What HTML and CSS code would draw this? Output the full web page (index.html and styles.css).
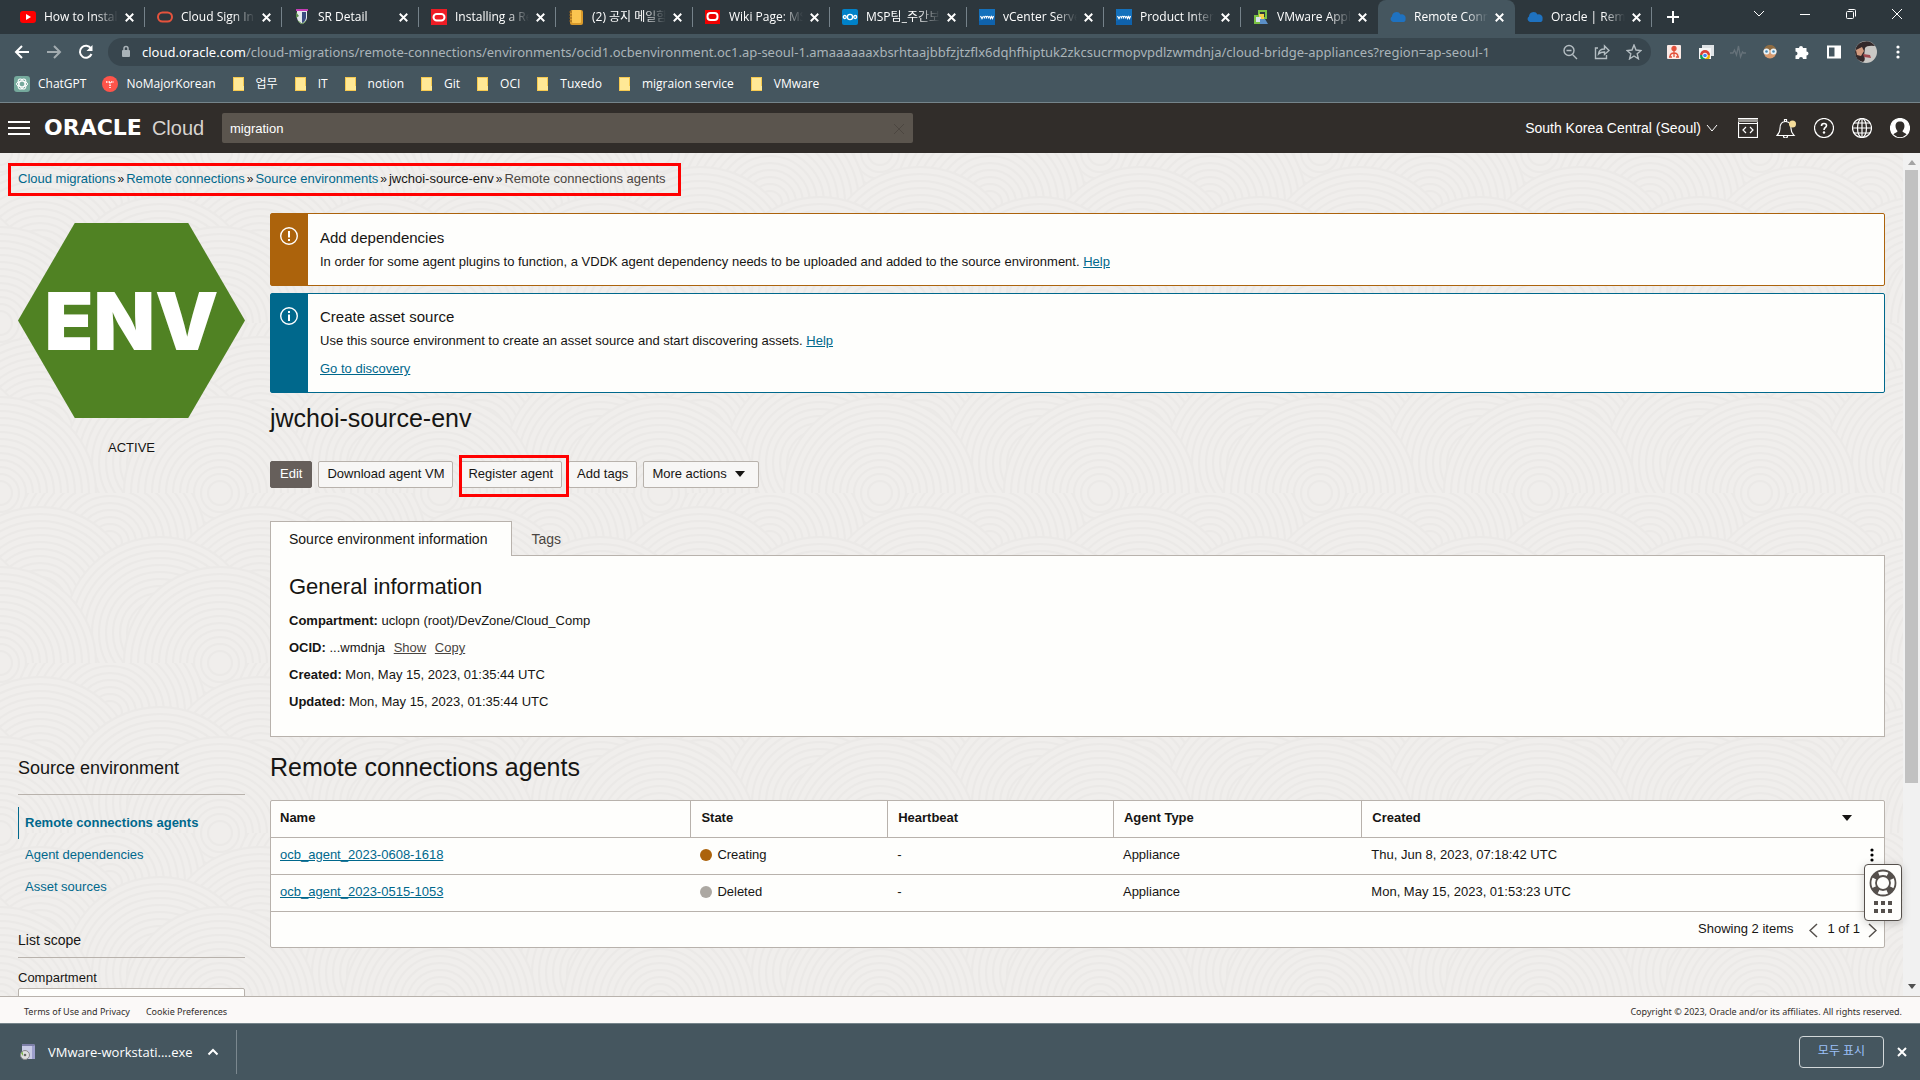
FILE: index.html
```html
<!DOCTYPE html>
<html lang="en">
<head>
    <meta charset="UTF-8">
    <meta name="viewport" content="width=device-width, initial-scale=1.0">
    <title>Remote Connections | Oracle Cloud</title>
    <link rel="stylesheet" href="styles.css">
</head>
<body>
    <!-- shared icons -->
    <svg class="defs" width="0" height="0" aria-hidden="true">
        <symbol id="i-x" viewBox="0 0 16 16"><path d="M4 4l8 8M12 4l-8 8" stroke="currentColor" stroke-width="2" fill="none"/></symbol>
        <symbol id="i-folder" viewBox="0 0 16 16"><path d="M1 1h11v14H1z" fill="#f6c94f"/><path d="M2 2h9v8h1v4H2z" fill="#ffe896"/></symbol>
        <symbol id="i-cloud" viewBox="0 0 16 16"><path d="M3 13a3 3 0 0 1-1-5.500 4.500 4.500 0 0 1 8.500-2A3.800 3.800 0 0 1 15.500 10q.5 3-3 3z" fill="#1f72c0"/></symbol>
        <symbol id="i-vmw" viewBox="0 0 16 16"><path d="M0 0h16v16H0z" fill="#0f62ac"/><path d="M0 0h16v7L0 12z" fill="#1a80cc" opacity=".5"/><path d="M1.500 7l1.500 2.500L4.500 7M5.500 9.500V8q1-1.500 2 0v1.500M7.500 8q1-1.500 2 0v1.500M10.500 7l1 2.500 1-2 1 2 1-2.500" fill="none" stroke="#fff" stroke-width="1.200"/></symbol>
        <symbol id="i-oracle" viewBox="0 0 16 16"><path d="M0 0h16v16H0z" fill="#ee1c25"/><rect x="2.500" y="5" width="11" height="6.500" rx="3.200" fill="none" stroke="#fff" stroke-width="2"/></symbol>
        <symbol id="i-caret" viewBox="0 0 10 6"><path d="M0 0h10L5 6z" fill="currentColor"/></symbol>
        <pattern id="rings" width="220" height="170" patternUnits="userSpaceOnUse">
            <g id="ring" fill="#f0eeec" stroke="#ebe9e7" stroke-width="2">
                <circle r="96"/><circle r="89"/><circle r="82"/><circle r="75"/><circle r="68"/><circle r="61"/><circle r="54"/><circle r="47"/><circle r="40"/><circle r="33"/><circle r="26"/><circle r="19"/><circle r="12"/>
            </g>
            <use href="#ring" x="220"/><use href="#ring" x="110" y="50"/>
            <use href="#ring" x="40" y="110"/><use href="#ring" x="260" y="110"/><use href="#ring" x="160" y="140"/>
            <use href="#ring" x="-60" y="140"/><use href="#ring" y="170"/><use href="#ring" x="220" y="170"/>
        </pattern>
    </svg>

    <div class="tabstrip">
        <div class="tab"><svg class="fav" viewBox="0 0 16 16"><rect y="2" width="16" height="12" rx="3" fill="#f00"/><path d="M6 5l5 3-5 3z" fill="#fff"/></svg><span class="tab-title">How to Install</span><button class="tab-x" aria-label="Close tab"><svg><use href="#i-x"/></svg></button></div>
        <div class="tab"><svg class="fav" viewBox="0 0 16 16"><rect x="1" y="3.500" width="14" height="9" rx="4.500" fill="none" stroke="#e5533d" stroke-width="2"/></svg><span class="tab-title">Cloud Sign In</span><button class="tab-x" aria-label="Close tab"><svg><use href="#i-x"/></svg></button></div>
        <div class="tab"><svg class="fav" viewBox="0 0 16 16"><path d="M3 2h10v7q-1 5-5 6-4-1-5-6z" fill="#e4e8ec"/><path d="M8 3h4v6q-1 4-4 5z" fill="#3b4a80"/><path d="M2 0h12v2H2z" fill="#c43cb4"/><path d="M2 3l3 4-3 2z" fill="#5c8c4c"/><path d="M4 12l4 3 4-3" stroke="#5c8c4c" fill="none"/></svg><span class="tab-title">SR Detail</span><button class="tab-x" aria-label="Close tab"><svg><use href="#i-x"/></svg></button></div>
        <div class="tab"><svg class="fav"><use href="#i-oracle"/></svg><span class="tab-title">Installing a Re</span><button class="tab-x" aria-label="Close tab"><svg><use href="#i-x"/></svg></button></div>
        <div class="tab"><svg class="fav" viewBox="0 0 16 16"><rect x="2" y="1" width="13" height="15" rx="2" fill="#d99a2b"/><rect x="4" y="1" width="9" height="13" rx="1" fill="#fbc550"/><path d="M1 3h3M1 6h3M1 9h3M1 12h3" stroke="#8e5f1e"/></svg><span class="tab-title">(2) 공지 메일함</span><button class="tab-x" aria-label="Close tab"><svg><use href="#i-x"/></svg></button></div>
        <div class="tab"><svg class="fav" viewBox="0 0 16 16"><path d="M0 1h15v14H0z" fill="#f00000"/><rect x="2.500" y="4" width="10" height="7" rx="3" fill="none" stroke="#fff" stroke-width="2"/></svg><span class="tab-title">Wiki Page: MS</span><button class="tab-x" aria-label="Close tab"><svg><use href="#i-x"/></svg></button></div>
        <div class="tab"><svg class="fav" viewBox="0 0 16 16"><rect width="16" height="16" rx="2" fill="#0082c9"/><g fill="none" stroke="#fff" stroke-width="1.300"><circle cx="8" cy="8" r="2.600"/><circle cx="2.800" cy="8" r="1.500"/><circle cx="13.200" cy="8" r="1.500"/></g></svg><span class="tab-title">MSP팀_주간보</span><button class="tab-x" aria-label="Close tab"><svg><use href="#i-x"/></svg></button></div>
        <div class="tab"><svg class="fav"><use href="#i-vmw"/></svg><span class="tab-title">vCenter Server</span><button class="tab-x" aria-label="Close tab"><svg><use href="#i-x"/></svg></button></div>
        <div class="tab"><svg class="fav"><use href="#i-vmw"/></svg><span class="tab-title">Product Inter</span><button class="tab-x" aria-label="Close tab"><svg><use href="#i-x"/></svg></button></div>
        <div class="tab no-sep"><svg class="fav" viewBox="0 0 16 16"><path d="M5 1h9v9H9v5H1V6h4z" fill="#7ac143"/><path d="M7 3h5v5H7z" fill="#2d373d"/><path d="M6 5h5v5H6z" fill="#f5d34a"/><path d="M3 8h5v5H3z" fill="#d7e3ee"/><path d="M7 10h5l3 5H7z" fill="#5b8fc7"/></svg><span class="tab-title">VMware Appl</span><button class="tab-x" aria-label="Close tab"><svg><use href="#i-x"/></svg></button></div>
        <div class="tab active"><svg class="fav"><use href="#i-cloud"/></svg><span class="tab-title">Remote Conn</span><button class="tab-x" aria-label="Close tab"><svg><use href="#i-x"/></svg></button></div>
        <div class="tab"><svg class="fav"><use href="#i-cloud"/></svg><span class="tab-title">Oracle | Rem</span><button class="tab-x" aria-label="Close tab"><svg><use href="#i-x"/></svg></button></div>
        <button class="new-tab" aria-label="New tab"><svg viewBox="0 0 16 16"><path d="M8 2v12M2 8h12" stroke="#fff" stroke-width="2"/></svg></button>
        <div class="win-controls">
            <button aria-label="Search tabs"><svg viewBox="0 0 12 12"><path d="M1 3l5 5 5-5"/></svg></button>
            <button aria-label="Minimize"><svg viewBox="0 0 12 12"><path d="M1 6.500h10"/></svg></button>
            <button aria-label="Restore"><svg viewBox="0 0 12 12"><rect x="1.500" y="3.500" width="7" height="7" rx="1"/><path d="M3.500 1.500h6q1 0 1 1v6"/></svg></button>
            <button aria-label="Close"><svg viewBox="0 0 12 12"><path d="M1 1l10 10M11 1L1 11"/></svg></button>
        </div>
    </div>

    <div class="toolbar">
        <button class="nav-btn" aria-label="Back"><svg viewBox="0 0 16 16"><path d="M15 8H2M8 2L2 8l6 6"/></svg></button>
        <button class="nav-btn dim" aria-label="Forward"><svg viewBox="0 0 16 16"><path d="M1 8h13M8 2l6 6-6 6"/></svg></button>
        <button class="nav-btn" aria-label="Reload"><svg viewBox="0 0 16 16"><path d="M13.500 10A6 6 0 1 1 13 4.500"/><path d="M14.500 1v6h-6z" fill="#fff" stroke="none"/></svg></button>
        <div class="omnibox">
            <svg class="lock" viewBox="0 0 10 14"><rect x="1" y="5" width="8" height="7" rx="1" fill="#a9b3b8"/><path d="M3 6V3.500a2 2 0 0 1 4 0V6" fill="none" stroke="#a9b3b8" stroke-width="1.500"/></svg>
            <span class="url"><b>cloud.oracle.com</b>/cloud-migrations/remote-connections/environments/ocid1.ocbenvironment.oc1.ap-seoul-1.amaaaaaaxbsrhtaajbbfzjtzflx6dqhfhiptuk2zkcsucrmopvpdlzwmdnja/cloud-bridge-appliances?region=ap-seoul-1</span>
            <button aria-label="Zoom"><svg viewBox="0 0 16 16"><circle cx="7" cy="6.500" r="5"/><path d="M4.500 6.500h5M10.500 10.500L15 15"/></svg></button>
            <button aria-label="Share"><svg viewBox="0 0 16 16"><path d="M4 4H1.500v10.500h11V11"/><path d="M4.500 10q.5-5 6-5V2l4.500 4.500-4.500 4V8q-4 0-6 2z"/></svg></button>
            <button aria-label="Bookmark"><svg viewBox="0 0 16 16"><path d="M8 1l2 5 5 .5-3.800 3.300 1.200 5L8 12l-4.400 2.800 1.200-5L1 6.500 6 6z"/></svg></button>
        </div>
        <div class="extensions">
            <button aria-label="Sitemap extension"><svg viewBox="0 0 16 16"><rect x="1" y="1" width="14" height="14" rx="1" fill="#fbeae6"/><g fill="none" stroke="#e2513c" stroke-width="1.300"><circle cx="8" cy="4.500" r="2" fill="#e2513c"/><path d="M8 5v8M4 13q0-4 4-4t4 4"/><path d="M3 13h3M10 13h3"/></g></svg></button>
            <button aria-label="Remote desktop"><svg viewBox="0 0 16 16"><path d="M4 1h12v11h-3V4H4z" fill="#dfe3e6"/><path d="M1 4h12v11H1z" fill="#f5f6f7"/><path d="M2 11a5 5 0 0 1 10 0z" fill="#db4437"/><path d="M2 11h4l1 4H3q-1-1-1-4z" fill="#0f9d58"/><path d="M12 11H8l-1 4h4q1-1 1-4z" fill="#f4b400"/><circle cx="7" cy="11.500" r="2.300" fill="#4285f4" stroke="#fff"/></svg></button>
            <button aria-label="Monitor"><svg viewBox="0 0 16 16"><path d="M0 9h3l1.500-3 2 5 2-9 2 11 2-5 1 1H16" fill="none" stroke="#66727a" stroke-width="1.300"/></svg></button>
            <button aria-label="Mask"><svg viewBox="0 0 16 16"><circle cx="8" cy="8" r="6.500" fill="#d99c70"/><path d="M2 6q1-5 6-5t6 5z" fill="#8f6c42"/><circle cx="4.500" cy="7.500" r="3" fill="#e8f3fa"/><circle cx="11.500" cy="7.500" r="3" fill="#e8f3fa"/><circle cx="4.500" cy="7.500" r="1.300" fill="#4a88b0"/><circle cx="11.500" cy="7.500" r="1.300" fill="#4a88b0"/></svg></button>
            <button aria-label="Extensions"><svg viewBox="0 0 16 16"><path d="M1.500 4H5a2 2 0 1 1 4 0h3.500v3.500a2 2 0 1 1 0 4V15H9a2 2 0 0 0-4 0H1.500v-3.500a2 2 0 0 0 0-4z" fill="#fff"/></svg></button>
            <button aria-label="Side panel"><svg viewBox="0 0 16 16"><path d="M1 1.500h14v13H1zM3 3.500v9h5.500v-9z" fill="#fff" fill-rule="evenodd"/></svg></button>
            <button class="avatar" aria-label="Profile"><svg viewBox="0 0 22 22"><circle cx="11" cy="11" r="11" fill="#c9c8c5"/><path d="M0 11a11 11 0 0 1 20-6q-8-1-10 2l-1 8q2 4-1 6-8-2-8-10z" fill="#33292a"/><path d="M1 9l6-3 2 4-3 5-4-1z" fill="#d19a7e"/><path d="M8 13l7 1 1 3-7-1z" fill="#a14a4f"/></svg></button>
            <button aria-label="Menu"><svg viewBox="0 0 16 16"><g fill="#fff"><circle cx="8" cy="3" r="1.600"/><circle cx="8" cy="8" r="1.600"/><circle cx="8" cy="13" r="1.600"/></g></svg></button>
        </div>
    </div>

    <nav class="bookmarks" aria-label="Bookmarks">
        <a href="#"><svg viewBox="0 0 16 16"><rect width="16" height="16" rx="3" fill="#75a99c"/><g fill="none" stroke="#fff"><ellipse cx="8" cy="8" rx="5.500" ry="2.800"/><ellipse cx="8" cy="8" rx="5.500" ry="2.800" transform="rotate(60 8 8)"/><ellipse cx="8" cy="8" rx="5.500" ry="2.800" transform="rotate(120 8 8)"/></g></svg>ChatGPT</a>
        <a href="#"><svg viewBox="0 0 16 16"><circle cx="8" cy="8" r="8" fill="#ff544a"/><path d="M4 6h8M8 6v6" stroke="#fff" stroke-width="1.500" stroke-dasharray="1.500 1"/></svg>NoMajorKorean</a>
        <a href="#"><svg><use href="#i-folder"/></svg>업무</a>
        <a href="#"><svg><use href="#i-folder"/></svg>IT</a>
        <a href="#"><svg><use href="#i-folder"/></svg>notion</a>
        <a href="#"><svg><use href="#i-folder"/></svg>Git</a>
        <a href="#"><svg><use href="#i-folder"/></svg>OCI</a>
        <a href="#"><svg><use href="#i-folder"/></svg>Tuxedo</a>
        <a href="#"><svg><use href="#i-folder"/></svg>migraion service</a>
        <a href="#"><svg><use href="#i-folder"/></svg>VMware</a>
    </nav>

    <header class="console-header">
        <button class="burger" aria-label="Navigation menu"><span></span><span></span><span></span></button>
        <a class="brand" href="#"><span class="brand-oracle">ORACLE</span><span class="brand-cloud">Cloud</span></a>
        <div class="search">
            <input type="text" value="migration" aria-label="Search">
            <svg viewBox="0 0 12 12"><path d="M1 1l10 10M11 1L1 11" stroke="#4c4640"/></svg>
        </div>
        <button class="region">South Korea Central (Seoul)<svg viewBox="0 0 12 8"><path d="M1 1l5 6 5-6"/></svg></button>
        <div class="header-icons">
            <button aria-label="Developer tools"><svg viewBox="0 0 20 20"><rect x=".5" y=".5" width="19" height="19"/><path d="M0 2.500h20" stroke="#9b9894" stroke-width="3"/><path d="M0 5.500h20M8 9l-3 3 3 3M12 9l3 3-3 3"/></svg></button>
            <button aria-label="Announcements"><svg viewBox="0 0 20 20"><path d="M1 17.500q3-3 3-7 0-7 5.500-7T15 10.500q0 4 3 7zM7.500 18a2 2 0 0 0 4 0M8.500 3.500v-2h2v2"/><circle cx="16.500" cy="6" r="3.500" fill="#f5dc9a" stroke="none"/></svg></button>
            <button aria-label="Help"><svg viewBox="0 0 20 20"><circle cx="10" cy="10" r="9.500"/><path d="M7.500 8q0-2.500 2.500-2.500t2.500 2q0 1.300-1.200 2T10 12" stroke-width="1.600"/><circle cx="10" cy="14.500" r="1.200" fill="#fff" stroke="none"/></svg></button>
            <button aria-label="Language"><svg viewBox="0 0 20 20"><circle cx="10" cy="10" r="9.500"/><ellipse cx="10" cy="10" rx="4.500" ry="9.500"/><path d="M10 0v20M.5 10h19M2 5h16M2 15h16"/></svg></button>
            <button aria-label="Profile"><svg viewBox="0 0 20 20"><circle cx="10" cy="10" r="9.500" fill="#fff"/><path d="M10 3.500c6 0 5 7 2.500 9.500 0 1.500 2.500 1.500 4 3.500Q10 22 3.500 16.500c1.500-2 4-2 4-3.500C5 10.500 4 3.500 10 3.500z" fill="#312d2a" stroke="none"/></svg></button>
        </div>
    </header>

    <div class="viewport">
        <div class="page">
            <svg class="page-bg" aria-hidden="true"><rect width="100%" height="100%" fill="url(#rings)"/></svg>
            <nav class="breadcrumb" aria-label="Breadcrumb">
                <a href="#">Cloud migrations</a><i>»</i><a href="#">Remote connections</a><i>»</i><a href="#">Source environments</a><i>»</i><a class="dark" href="#">jwchoi-source-env</a><i>»</i><span>Remote connections agents</span>
            </nav>

            <div class="layout">
                <div class="resource">
                    <div class="hexagon">ENV</div>
                    <p>ACTIVE</p>
                </div>

                <main class="details">
                    <section class="alert warning">
                        <div class="alert-icon"><svg viewBox="0 0 18 18"><circle cx="9" cy="9" r="8.300"/><path d="M9 4v6.500M9 12v2" stroke-width="2"/></svg></div>
                        <div class="alert-body">
                            <h4>Add dependencies</h4>
                            <p>In order for some agent plugins to function, a VDDK agent dependency needs to be uploaded and added to the source environment. <a href="#">Help</a></p>
                        </div>
                    </section>
                    <section class="alert info">
                        <div class="alert-icon"><svg viewBox="0 0 18 18"><circle cx="9" cy="9" r="8.300"/><path d="M9 4v2M9 7.500V14" stroke-width="2"/></svg></div>
                        <div class="alert-body">
                            <h4>Create asset source</h4>
                            <p>Use this source environment to create an asset source and start discovering assets. <a href="#">Help</a></p>
                            <p class="alert-link"><a href="#">Go to discovery</a></p>
                        </div>
                    </section>

                    <h1>jwchoi-source-env</h1>

                    <div class="actions">
                        <button class="btn primary">Edit</button>
                        <button class="btn">Download agent VM</button>
                        <div class="marked"><button class="btn">Register agent</button></div>
                        <button class="btn">Add tags</button>
                        <button class="btn">More actions<svg><use href="#i-caret"/></svg></button>
                    </div>

                    <div class="tabs" role="tablist">
                        <button class="selected" role="tab">Source environment information</button>
                        <button role="tab">Tags</button>
                    </div>
                    <section class="panel">
                        <h3>General information</h3>
                        <p><strong>Compartment:</strong> uclopn (root)/DevZone/Cloud_Comp</p>
                        <p><strong>OCID:</strong> ...wmdnja <a href="#">Show</a> <a href="#">Copy</a></p>
                        <p><strong>Created:</strong> Mon, May 15, 2023, 01:35:44 UTC</p>
                        <p><strong>Updated:</strong> Mon, May 15, 2023, 01:35:44 UTC</p>
                    </section>
                </main>

                <aside class="side">
                    <h3>Source environment</h3>
                    <ul>
                        <li class="current"><a href="#">Remote connections agents</a></li>
                        <li><a href="#">Agent dependencies</a></li>
                        <li><a href="#">Asset sources</a></li>
                    </ul>
                    <h4>List scope</h4>
                    <label for="compartment">Compartment</label>
                    <select id="compartment"><option>Cloud_Comp</option></select>
                </aside>

                <section class="agents">
                    <h2>Remote connections agents</h2>
                    <div class="table-box">
                        <table>
                            <colgroup><col class="c-name"><col class="c-state"><col class="c-beat"><col class="c-type"><col></colgroup>
                            <thead>
                                <tr><th>Name</th><th>State</th><th>Heartbeat</th><th>Agent Type</th><th><div class="sort">Created<svg><use href="#i-caret"/></svg></div></th></tr>
                            </thead>
                            <tbody>
                                <tr><td><a href="#">ocb_agent_2023-0608-1618</a></td><td><span class="dot creating"></span>Creating</td><td>-</td><td>Appliance</td><td><div class="sort">Thu, Jun 8, 2023, 07:18:42 UTC<button class="kebab" aria-label="Row actions"><svg viewBox="0 0 4 14"><circle cx="2" cy="2" r="1.600"/><circle cx="2" cy="7" r="1.600"/><circle cx="2" cy="12" r="1.600"/></svg></button></div></td></tr>
                                <tr><td><a href="#">ocb_agent_2023-0515-1053</a></td><td><span class="dot deleted"></span>Deleted</td><td>-</td><td>Appliance</td><td>Mon, May 15, 2023, 01:53:23 UTC</td></tr>
                            </tbody>
                        </table>
                        <div class="pager">
                            <span>Showing 2 items</span>
                            <button aria-label="Previous page"><svg viewBox="0 0 9 15"><path d="M8 1L1 7.500 8 14"/></svg></button>
                            <span class="pager-pos">1 of 1</span>
                            <button aria-label="Next page"><svg viewBox="0 0 9 15"><path d="M1 1l7 6.500L1 14"/></svg></button>
                        </div>
                    </div>
                </section>
            </div>
        </div>
        <div class="scrollbar"><svg class="up"><use href="#i-caret"/></svg><div class="thumb"></div><svg><use href="#i-caret"/></svg></div>
        <button class="support" aria-label="Support">
            <svg class="buoy" viewBox="0 0 28 28"><g fill="none" stroke="#55504c"><circle cx="14" cy="14" r="12.500" stroke-width="1.800"/><circle cx="14" cy="14" r="7" stroke-width="1.800"/><circle cx="14" cy="14" r="10" stroke-width="6" stroke-dasharray="6.500 9.208" stroke-dashoffset="-4.600"/></g></svg>
            <svg class="grip" viewBox="0 0 18 12"><path d="M0 0h4v4H0zM7 0h4v4H7zM14 0h4v4h-4zM0 8h4v4H0zM7 8h4v4H7zM14 8h4v4h-4z" fill="#55504c"/></svg>
        </button>
    </div>

    <footer class="legal">
        <a href="#">Terms of Use and Privacy</a>
        <a href="#">Cookie Preferences</a>
        <span>Copyright © 2023, Oracle and/or its affiliates. All rights reserved.</span>
    </footer>

    <div class="downloads">
        <div class="download">
            <svg class="exe" viewBox="0 0 16 16"><path d="M2 0h12l1 2v13H2z" fill="#c9cbe6"/><path d="M2 0h12l1 2H2z" fill="#7d7fa8"/><path d="M12 2h3v13h-3z" fill="#9d9fcc"/><circle cx="5" cy="11" r="4.500" fill="#dedede" stroke="#8a8a8a"/><circle cx="5" cy="11" r="1.300" fill="#666"/><path d="M1 9l2-1v4z" fill="#7ab648"/></svg>
            <span>VMware-workstati....exe</span>
            <button aria-label="Download options"><svg viewBox="0 0 12 8"><path d="M1.500 6.500L6 2l4.500 4.500" fill="none" stroke="#fff" stroke-width="2"/></svg></button>
        </div>
        <button class="show-all">모두 표시</button>
        <button class="close-bar" aria-label="Close"><svg><use href="#i-x"/></svg></button>
    </div>
</body>
</html>
```
FILE: styles.css
```css
* { box-sizing: border-box; }
html, body { height: 100%; }
body {
    margin: 0;
    display: flex;
    flex-direction: column;
    overflow: hidden;
    font: 13px/20px "Liberation Sans", Arial, sans-serif;
    color: #161513;
    background: #f0eeec;
}
h1, h2, h3, h4, p, ul { margin: 0; padding: 0; font-weight: normal; }
ul { list-style: none; }
a { color: #00688c; }
button { font: inherit; color: inherit; background: none; border: 0; padding: 0; display: flex; align-items: center; justify-content: center; }
svg { display: block; flex: none; }
.defs { position: absolute; }

/* browser chrome */
.tabstrip, .toolbar, .bookmarks, .downloads { font: 12px/16px "Open Sans", "Noto Sans CJK KR", sans-serif; color: #fff; flex: none; display: flex; align-items: center; }
.tabstrip { height: 34px; background: #2d373d; padding-left: 8px; }
.tab { width: 137px; height: 34px; flex: 0 1 auto; display: flex; align-items: center; padding: 0 8px 0 12px; position: relative; }
.tab::after { content: ""; position: absolute; right: 0; top: 7px; height: 20px; border-right: 1px solid #75828a; }
.tab.no-sep::after, .tab.active::after { display: none; }
.tab.active { background: #45565f; border-radius: 8px 8px 0 0; }
.fav { width: 16px; height: 16px; }
.tab-title { flex: 1; min-width: 0; margin: 0 4px 0 8px; overflow: hidden; white-space: nowrap; -webkit-mask-image: linear-gradient(90deg, #000 70%, transparent); mask-image: linear-gradient(90deg, #000 70%, transparent); }
.tab-x svg { width: 15px; height: 15px; }
.new-tab { margin-left: 13px; }
.new-tab svg { width: 16px; height: 16px; }
.win-controls { margin-left: auto; display: flex; align-self: flex-start; }
.win-controls button { width: 46px; height: 28px; }
.win-controls svg { width: 12px; height: 12px; fill: none; stroke: #fff; }

.toolbar { height: 36px; background: #45565f; padding: 0 6px; }
.nav-btn { width: 32px; height: 28px; }
.nav-btn svg { width: 16px; height: 16px; fill: none; stroke: #fff; stroke-width: 2; }
.nav-btn.dim { opacity: .5; }
.omnibox { flex: 1; min-width: 0; height: 28px; margin-left: 6px; border-radius: 14px; background: #38464e; display: flex; align-items: center; gap: 16px; padding: 0 9px 0 13px; }
.lock { width: 10px; height: 14px; }
.url { flex: 1; min-width: 0; margin-left: -5px; font-family: "Noto Sans", sans-serif; font-size: 13px; color: #aab4b9; white-space: nowrap; overflow: hidden; line-height: 20px; }
.url b { font-weight: normal; color: #fff; }
.omnibox button svg { width: 16px; height: 16px; fill: none; stroke: #b4bdc2; stroke-width: 1.4; }
.extensions { display: flex; gap: 16px; margin-left: 15px; padding-right: 8px; }
.extensions button { width: 16px; height: 22px; }
.extensions svg { width: 16px; height: 16px; }
.extensions .avatar svg { width: 22px; height: 22px; }

.bookmarks { height: 33px; background: #45565f; border-bottom: 1px solid #75848a; padding: 0 14px 4px; gap: 16px; }
.bookmarks a { display: flex; align-items: center; gap: 8px; color: #fff; text-decoration: none; white-space: nowrap; }
.bookmarks svg { width: 16px; height: 16px; }

/* console header */
.console-header { flex: none; height: 50px; background: #312d2a; color: #fff; display: flex; align-items: center; padding: 0 10px 0 8px; }
.burger { width: 22px; height: 14px; flex-direction: column; justify-content: space-between; }
.burger span { width: 100%; height: 2px; background: #fff; }
.brand { display: flex; align-items: center; width: 177px; margin-left: 14px; color: #fff; text-decoration: none; }
.brand-oracle { font: bold 22px/24px "DejaVu Sans", sans-serif; }
.brand-cloud { font-size: 20px; line-height: 24px; margin-left: 10px; color: #d8d4d0; }
.search { flex: 0 1 691px; height: 30px; margin-left: 1px; background: #5b554e; border-radius: 2px; display: flex; align-items: center; padding: 2px 8px 0; }
.search input { flex: 1; min-width: 0; border: 0; padding: 0; outline: 0; background: none; color: #fff; font: inherit; }
.search svg { width: 12px; height: 12px; }
.region { margin-left: auto; font-size: 14px; gap: 5px; white-space: nowrap; }
.region svg { width: 12px; height: 8px; fill: none; stroke: #fff; }
.header-icons { display: flex; gap: 18px; margin-left: 20px; }
.header-icons svg { width: 20px; height: 20px; fill: none; stroke: #fff; stroke-width: 1.2; }

/* scrolling area */
.viewport { flex: 1; min-height: 0; display: flex; position: relative; }
.page { flex: 1; min-width: 0; overflow: hidden; position: relative; padding: 10px 18px 0; }
.page-bg { position: absolute; top: 0; left: 0; width: 100%; height: 100%; z-index: -1; }
.breadcrumb { display: flex; width: fit-content; align-items: center; height: 33px; margin-left: -10px; padding: 0 12px 2px 7px; border: 3px solid #f00; white-space: nowrap; }
.breadcrumb a { text-decoration: none; }
.breadcrumb a.dark { color: #161513; }
.breadcrumb span { color: #4a4541; }
.breadcrumb i { font-style: normal; font-size: 12px; margin: 0 2px; }
.layout { display: grid; grid-template-columns: 227px minmax(0, 1fr); column-gap: 25px; margin-top: 17px; }
.scrollbar { width: 17px; background: #f1f1f1; display: flex; flex-direction: column; align-items: center; padding: 7px 0; color: #505050; }
.scrollbar svg { width: 8px; height: 5px; margin-top: auto; }
.scrollbar .up { transform: rotate(180deg); margin-top: 0; color: #a3a3a3; }
.thumb { width: 13px; height: 74%; margin-top: 5px; background: #c1c1c1; }

.resource { padding-top: 10px; text-align: center; }
.hexagon { height: 195px; background: #508223; clip-path: polygon(25% 0, 75% 0, 100% 50%, 75% 100%, 25% 100%, 0 50%); color: #fff; font: 900 80px/195px Inter, sans-serif; }
.resource p { margin-top: 20px; }

.alert { display: flex; background: #fefefc; border: 1px solid; border-radius: 2px; margin-bottom: 7px; }
.alert.warning { border-color: #ac630c; }
.alert.info { border-color: #00688c; margin-bottom: 10px; }
.alert-icon { width: 37px; padding: 13px 0 0 9px; }
.warning .alert-icon { background: #ac630c; }
.info .alert-icon { background: #00688c; }
.alert-icon svg { width: 18px; height: 18px; fill: none; stroke: #fff; stroke-width: 1.4; }
.alert-body { padding: 14px 12px 13px; }
.info .alert-body { padding-top: 13px; }
.alert h4 { font-size: 15px; margin-bottom: 4px; }
.alert .alert-link { margin-top: 8px; }

h1, h2 { font-size: 25px; line-height: 30px; }
.actions { display: flex; gap: 6px; margin-top: 28px; }
.btn { height: 27px; padding: 0 8px 2px; border: 1px solid #b8b2ac; border-radius: 2px; background: #f7f6f5; white-space: nowrap; }
.btn svg { width: 10px; height: 6px; margin: 0 5px 0 8px; }
.btn.primary { padding: 0 9px 2px; background: #665f5b; border-color: #665f5b; color: #fff; }
.marked { position: relative; }
.marked::after { content: ""; position: absolute; top: -6px; right: -7px; bottom: -9px; left: 0; border: 3px solid #f00; }

.tabs { display: flex; margin-top: 33px; font-size: 14px; }
.tabs button { height: 34px; padding: 0 18px; color: #4a4541; border: 1px solid transparent; border-bottom: 0; }
.tabs .selected { height: 35px; margin-bottom: -1px; position: relative; background: #fefefc; border-color: #b8b2ac; color: #161513; padding: 0 24px 0 18px; }
.panel { background: #fefefc; border: 1px solid #b8b2ac; padding: 16px 18px 21px; }
.panel h3 { font-size: 22px; line-height: 30px; margin-bottom: 5px; }
.panel p { line-height: 27px; }
.panel a { color: #4a4541; margin-left: 5px; }

.side h3 { font-size: 18px; line-height: 30px; padding: 16px 0 11px; border-bottom: 1px solid #b8b2ac; }
.side ul { margin-top: 12px; }
.side li { padding: 6px 7px; }
.side li.current { border-left: 1px solid #00688c; padding-left: 6px; font-weight: bold; }
.side li a { text-decoration: none; }
.side h4 { font-size: 14px; margin-top: 27px; padding-bottom: 7px; border-bottom: 1px solid #b8b2ac; }
.side label { display: block; margin-top: 10px; }
.side select { width: 100%; height: 30px; border: 1px solid #b8b2ac; border-radius: 2px; background: #fefefc; font: inherit; }

.agents h2 { padding: 15px 0 18px; line-height: 30px; }
.table-box { background: #fefefc; border: 1px solid #b8b2ac; border-radius: 2px; }
table { width: 100%; table-layout: fixed; border-collapse: separate; border-spacing: 0; }
.c-name { width: 26%; }
.c-state { width: 12.2%; }
.c-beat { width: 14%; }
.c-type { width: 15.4%; }
th, td { height: 37px; padding: 0 10px 3px; text-align: left; border-bottom: 1px solid #b8b2ac; white-space: nowrap; }
th + th { border-left: 1px solid #b8b2ac; }
th:first-child, td:first-child { padding-left: 9px; }
.sort { display: flex; align-items: center; justify-content: space-between; }
.sort > svg { width: 10px; height: 6px; margin-right: 22px; }
.kebab svg { width: 4px; height: 14px; }
.dot { display: inline-block; width: 12px; height: 12px; border-radius: 50%; margin-right: 5px; vertical-align: -2px; }
.creating { background: #ac630c; }
.deleted { background: #aca8a2; }
.pager { display: flex; align-items: center; justify-content: flex-end; height: 35px; padding: 0 7px 2px 0; }
.pager svg { width: 9px; height: 15px; fill: none; stroke: #55504c; stroke-width: 1.5; }
.pager button { margin: 3px 0 0 16px; }
.pager-pos { margin-left: 9px; }
.pager .pager-pos + button { margin-left: 8px; }

.support { position: absolute; right: 18px; bottom: 75px; width: 38px; height: 57px; flex-direction: column; justify-content: space-between; padding: 4px 0 7px; background: #fefefc; border: 1px solid #55504c; border-radius: 4px; box-shadow: 0 2px 10px rgba(0, 0, 0, .2); }
.buoy { width: 28px; height: 28px; }
.grip { width: 18px; height: 12px; }

.legal { flex: none; height: 27px; display: flex; align-items: center; gap: 16px; padding: 3px 18px 0 24px; background: #fbf9f8; border-top: 1px solid #b8b2ac; font: 9px/14px "Noto Sans", sans-serif; color: #312d2a; }
.legal a { color: inherit; text-decoration: none; }
.legal span { margin-left: auto; }

.downloads { height: 57px; background: #45565f; border-top: 1px solid #75848a; padding-right: 10px; font-size: 13px; }
.download { display: flex; align-items: center; width: 237px; height: 44px; padding-left: 20px; border-right: 1px solid #7b888f; }
.exe { width: 16px; height: 16px; margin-right: 12px; }
.download button { margin: 0 17px 0 auto; }
.download button svg { width: 12px; height: 8px; }
.show-all { margin-left: auto; width: 85px; height: 32px; border: 1px solid #d3d8da; border-radius: 4px; color: #9cc0f8; font-size: 12px; padding-bottom: 2px; }
.close-bar { margin-left: 10px; }
.close-bar svg { width: 16px; height: 16px; }
```
